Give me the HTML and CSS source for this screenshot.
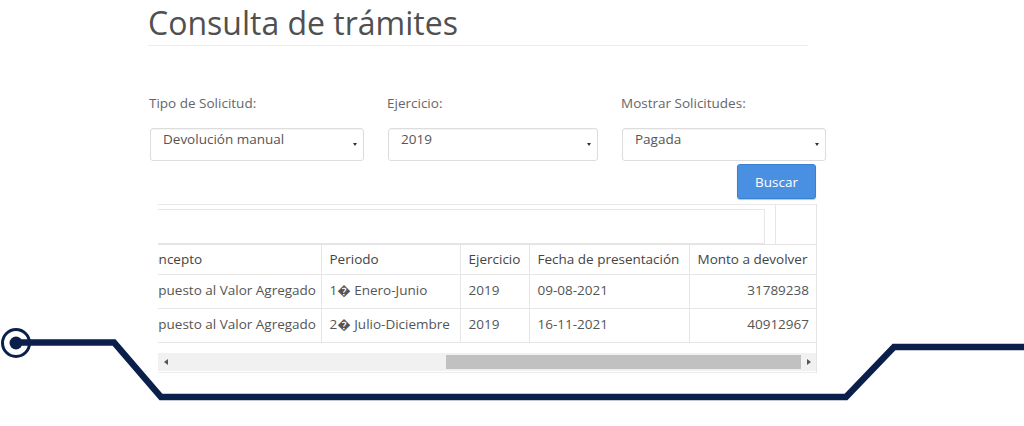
FILE: index.html
```html
<!DOCTYPE html>
<html lang="es">
<head>
<meta charset="utf-8">
<title>Consulta de trámites</title>
<link rel="stylesheet" href="styles.css">
</head>
<body>
<div class="page">
  <div class="content">
    <h1 class="title">Consulta de trámites</h1>
    <div class="filters">
      <div class="field f1">
        <label class="label">Tipo de Solicitud:</label>
        <div class="select"><span>Devolución manual</span><span class="caret"></span></div>
      </div>
      <div class="field f2">
        <label class="label">Ejercicio:</label>
        <div class="select"><span>2019</span><span class="caret"></span></div>
      </div>
      <div class="field f3">
        <label class="label">Mostrar Solicitudes:</label>
        <div class="select"><span>Pagada</span><span class="caret"></span></div>
      </div>
    </div>
    <div class="actions"><button class="btn">Buscar</button></div>
    <div class="grid-box">
      <div class="toolbar">
        <div class="search"></div>
        <div class="tool-sep"></div>
      </div>
      <div class="viewport">
        <table class="tbl">
          <colgroup><col class="c1"><col class="c2"><col class="c3"><col class="c4"><col class="c5"></colgroup>
          <thead>
            <tr><th>Concepto</th><th>Periodo</th><th>Ejercicio</th><th>Fecha de presentación</th><th>Monto a devolver</th></tr>
          </thead>
          <tbody>
            <tr><td>Impuesto al Valor Agregado</td><td>1� Enero-Junio</td><td>2019</td><td>09-08-2021</td><td class="num">31789238</td></tr>
            <tr><td>Impuesto al Valor Agregado</td><td>2� Julio-Diciembre</td><td>2019</td><td>16-11-2021</td><td class="num">40912967</td></tr>
          </tbody>
        </table>
      </div>
      <div class="scrollbar">
        <span class="arrow left"></span>
        <div class="track"><div class="spacer"></div><div class="thumb"></div></div>
        <span class="arrow right"></span>
      </div>
    </div>
  </div>
  <svg class="deco" width="1024" height="426" viewBox="0 0 1024 426" aria-hidden="true">
    <circle cx="16" cy="343" r="13.5" fill="none" stroke="#0b1f4b" stroke-width="3"/>
    <circle cx="16" cy="343" r="6.5" fill="#0b1f4b"/>
    <polyline points="16,342.5 114,342.5 161,397 846,397 894,347 1030,347" fill="none" stroke="#0b1f4b" stroke-width="6.5" stroke-linejoin="miter"/>
  </svg>
</div>
</body>
</html>
```
FILE: styles.css
```css
* { box-sizing: border-box; }
html, body { margin: 0; padding: 0; background: #fff; }
body { font-family: "Open Sans", "Noto Sans", sans-serif; color: #555; }
.page { position: relative; width: 1024px; height: 426px; overflow: hidden; }
.content { padding-left: 148px; width: 830px; }
.title {
  margin: 0; width: 660px; font-weight: 400; font-size: 32px; line-height: 44px;
  padding-top: 1px; color: #505050; border-bottom: 1px solid #ececec; letter-spacing: 0;
}
.filters { display: flex; margin-top: 47px; padding-left: 2px; }
.field { display: flex; flex-direction: column; }
.f1 { width: 214px; margin-right: 24px; }
.f2 { width: 210px; margin-right: 24px; }
.f3 { width: 204px; }
.label { font-size: 13.5px; line-height: 20px; color: #666; margin-bottom: 15px; margin-left: -1px; }
.select {
  height: 33px; border: 1px solid #ddd; border-radius: 3px; background: #fff;
  display: flex; justify-content: space-between; align-items: flex-start;
  padding: 0 6px 0 12px; font-size: 13.5px; line-height: 20px; color: #555;
  box-shadow: inset 0 1px 1px rgba(0,0,0,0.04);
}
.caret {
  width: 0; height: 0; margin-top: 14px; border-left: 2.5px solid transparent;
  border-right: 2.5px solid transparent; border-top: 3px solid #333;
}
.actions { display: flex; justify-content: flex-end; width: 668px; margin-top: 3px; }
.btn {
  width: 79px; height: 35px; border: 1px solid #3a7fd0; border-radius: 3px;
  background: #4a90e2; color: #fff; font-family: inherit; font-size: 13.5px;
  box-shadow: 0 1px 1px rgba(0,0,0,0.25); padding: 0;
}
.grid-box {
  margin-top: 5px; margin-left: 10px; width: 659px; height: 169px;
  border-top: 1px solid #e8e8e8; border-right: 1px solid #e4e4e4; border-bottom: 1px solid #ededed;
  display: flex; flex-direction: column;
}
.toolbar { display: flex; height: 39px; padding-top: 4px; }
.search { width: 607px; height: 35px; border: 1px solid #e6e6e6; border-left: none; }
.tool-sep { width: 1px; margin-left: 10px; margin-top: -4px; background: #e6e6e6; }
.viewport { overflow: hidden; height: 99px; border-top: 1px solid #e3e3e3; }
.tbl {
  border-collapse: collapse; margin-left: -24px; width: 683px; font-size: 13.5px;
  color: #555; table-layout: fixed;
}
.tbl th, .tbl td { padding: 0 8px; white-space: nowrap; overflow: hidden; border: 1px solid #e6e6e6; text-align: left; }
.tbl thead tr { height: 29px; }
.tbl tbody tr { height: 34px; }
.tbl th { font-weight: 400; color: #444; border-top: none; }
.tbl td { padding-bottom: 2px; }
.tbl tr > :first-child { border-left: none; }
.tbl tr > :last-child { border-right: none; }
.tbl td:first-child { padding-right: 0; }
.c1 { width: 187px; }
.c2 { width: 139px; }
.c3 { width: 69px; }
.c4 { width: 160px; }
.c5 { width: 128px; }
.num { text-align: right !important; }
.scrollbar {
  margin-top: 10px; height: 18px; display: flex; align-items: center; background: #f1f1f1;
  padding: 0 4px;
}
.arrow { width: 0; height: 0; border-top: 3px solid transparent; border-bottom: 3px solid transparent; }
.arrow.left { border-right: 4px solid #555; margin-left: 2px; }
.arrow.right { border-left: 4px solid #555; margin-right: 1px; }
.track { flex: 1; display: flex; height: 100%; padding: 2px 6px; }
.spacer { width: 272px; }
.thumb { flex: 1; background: #c1c1c1; }
.deco { position: absolute; left: 0; top: 0; pointer-events: none; }
```
